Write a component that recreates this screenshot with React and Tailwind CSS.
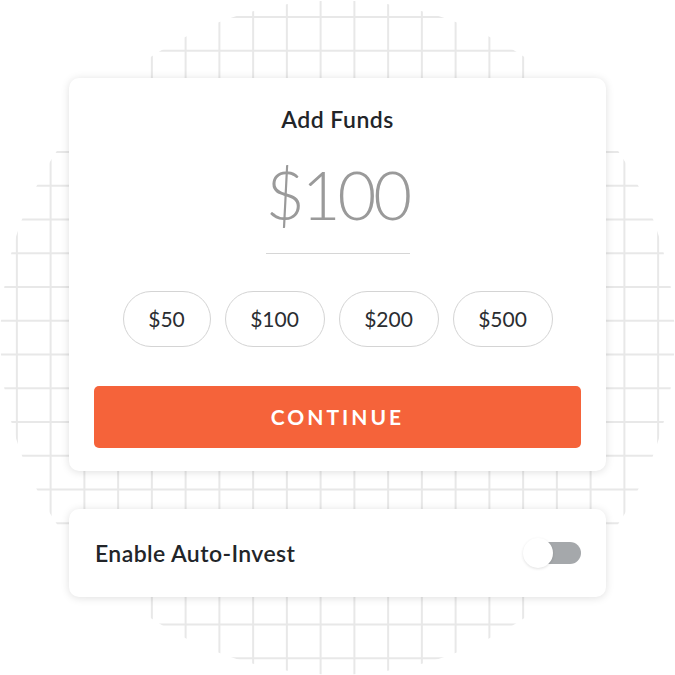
import React from "react";

const STEP = 33.75;
const lines = Array.from({ length: 20 }, (_, k) => (k + 0.5) * STEP);

function Grid() {
  return (
    <svg className="absolute inset-0" width="675" height="675" viewBox="0 0 675 675">
      <defs>
        <clipPath id="circ">
          <circle cx="337.5" cy="337.5" r="337" />
        </clipPath>
      </defs>
      <g clipPath="url(#circ)" stroke="#e8e8e8" strokeWidth="2">
        {lines.map((p) => (
          <line key={"v" + p} x1={p} y1="0" x2={p} y2="675" />
        ))}
        {lines.map((p) => (
          <line key={"h" + p} x1="0" y1={p} x2="675" y2={p} />
        ))}
      </g>
    </svg>
  );
}

const amounts = [
  { label: "$50", w: "w-[88px]" },
  { label: "$100", w: "w-[100px]" },
  { label: "$200", w: "w-[100px]" },
  { label: "$500", w: "w-[100px]" },
];

export default function App() {
  return (
    <div className="relative w-[675px] h-[675px] bg-white overflow-hidden font-['Lato',sans-serif]">
      <Grid />
      <div className="relative flex flex-col gap-[38px] pt-[78px] px-[69px]">
        <div className="h-[393px] rounded-[10px] bg-white shadow-[0_1px_8px_rgba(0,0,0,0.13)] flex flex-col items-center px-[25px]">
          <div className="mt-[26px] text-[23px] leading-[30px] font-semibold tracking-[0.5px] text-[#222529]">Add Funds</div>
          <div className="mt-[27px] text-[67px] leading-none font-light tracking-[-3px] text-[#9a9a9a]">$100</div>
          <div className="mt-[25px] w-[144px] h-px bg-[#d6d6d6]" />
          <div className="mt-[37px] flex gap-[14px]">
            {amounts.map((a) => (
              <div
                key={a.label}
                className={`${a.w} h-[56px] rounded-full border border-[#d4d4d4] flex items-center justify-center text-[21px] text-[#2a2d31]`}
              >
                {a.label}
              </div>
            ))}
          </div>
          <div className="mt-[39px] w-full h-[62px] rounded-[5px] bg-[#f5633a] flex items-center justify-center text-white text-[21px] font-bold tracking-[3px]">
            CONTINUE
          </div>
        </div>
        <div className="h-[88px] rounded-[10px] bg-white shadow-[0_1px_8px_rgba(0,0,0,0.13)] flex items-center justify-between pl-[26px] pr-[25px]">
          <div className="text-[23px] font-semibold tracking-[0.4px] text-[#222529]">Enable Auto-Invest</div>
          <div className="relative w-[58px] h-[30px] flex items-center">
            <div className="absolute right-0 w-[46px] h-[22px] rounded-full bg-[#a5a8ab]" />
            <div className="absolute left-0 w-[30px] h-[30px] rounded-full bg-white shadow-[0_1px_3px_rgba(0,0,0,0.12)]" />
          </div>
        </div>
      </div>
    </div>
  );
}
